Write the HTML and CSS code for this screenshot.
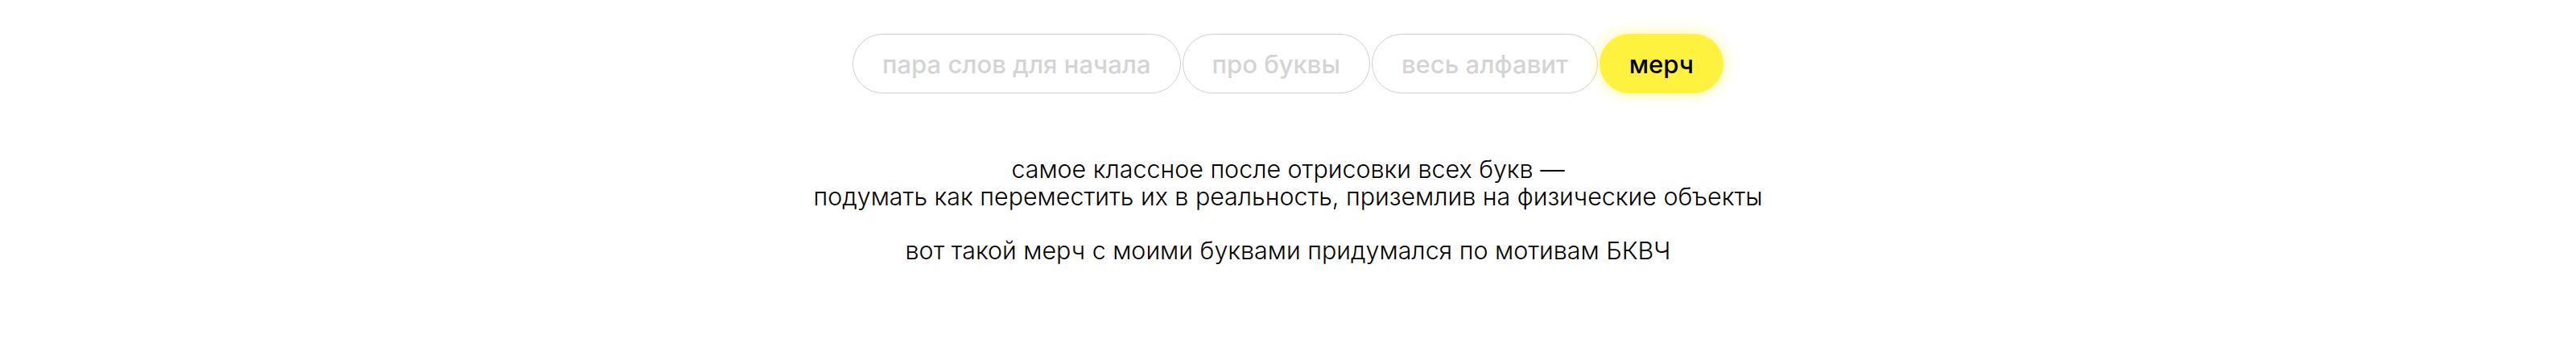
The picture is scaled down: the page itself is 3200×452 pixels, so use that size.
FILE: index.html
```html
<!DOCTYPE html>
<html lang="ru">
<head>
    <meta charset="UTF-8">
    <meta name="viewport" content="width=device-width, initial-scale=1.0">
    <title>мерч</title>
    <link rel="stylesheet" href="styles.css">
</head>
<body>

<div class="tabs">
    <button class="tab">пара слов для начала</button>
    <button class="tab">про буквы</button>
    <button class="tab">весь алфавит</button>
    <button class="tab active">мерч</button>
</div>

<div class="story">
    <p>самое классное после отрисовки всех букв —<br>
    подумать как переместить их в реальность, приземлив на физические объекты</p>
    <p>вот такой мерч с моими буквами придумался по мотивам БКВЧ</p>
</div>

</body>
</html>
```

FILE: styles.css
```css
body {
    margin: 0;
    font-family: Inter, "Noto Sans", sans-serif;
    background: #fff;
    color: #000;
}

.tabs {
    display: flex;
    justify-content: center;
    gap: 2px;
    padding-top: 42px;
}

.tab {
    height: 74px;
    padding: 0 36px;
    border: 1.5px solid #d0d0d0;
    border-radius: 37px;
    background: #fff;
    color: #d4d4d4;
    font-family: inherit;
    font-size: 31px;
    font-weight: 500;
    cursor: pointer;
}

.tab.active {
    background: #fff23f;
    border-color: #fff23f;
    color: #000;
    box-shadow: 0 0 18px rgba(255, 240, 60, 0.55);
}

.story {
    margin-top: 78px;
    text-align: center;
    font-size: 30.4px;
    font-weight: 300;
    line-height: 33.5px;
}

.story p {
    margin: 0 0 33.5px;
}
```
